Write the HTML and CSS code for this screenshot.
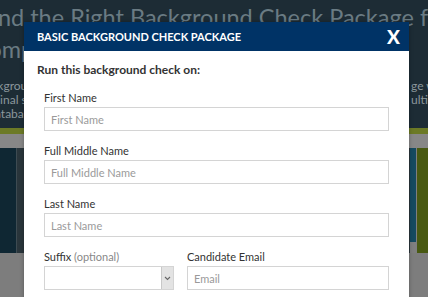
FILE: index.html
```html
<!DOCTYPE html>
<html lang="en">
<head>
  <meta charset="UTF-8" />
  <meta name="viewport" content="width=device-width, initial-scale=1.0"/>
  <title>Basic Background Check Package</title>
  <link rel="stylesheet" href="styles.css">
</head>
<body>
  <div class="page">
    <div class="hero">
      <h1><span class="h-l1">Find the Right Background Check Package for your</span><span class="h-l2">Company</span></h1>
      <div class="hero-text">
        <p class="line l1"><span>Background checks made simple. Choose a package</span><span>ge with</span></p>
        <p class="line l2"><span>Criminal searches, verifications and m</span><span>ulti</span></p>
        <p class="line l3"><span>Database record checks in one order</span><span></span></p>
      </div>
    </div>
    <div class="olive-line"></div>
    <div class="gray-band"></div>
    <div class="cols">
      <div class="col-dark"></div>
      <div class="col-sep"></div>
      <div class="col-mid"></div>
      <div class="col-teal"></div>
      <div class="col-olive"></div>
    </div>
    <div class="gray-foot"></div>
  </div>

  <div class="modal">
    <div class="modal-header">
      <h2>BASIC BACKGROUND CHECK PACKAGE</h2>
      <button class="close-btn">X</button>
    </div>
    <div class="modal-body">
      <h3>Run this background check on:</h3>
      <div class="field">
        <label>First Name</label>
        <input type="text" placeholder="First Name">
      </div>
      <div class="field">
        <label>Full Middle Name</label>
        <input type="text" placeholder="Full Middle Name">
      </div>
      <div class="field">
        <label>Last Name</label>
        <input type="text" placeholder="Last Name">
      </div>
      <div class="field-row">
        <div class="field suffix">
          <label>Suffix <span class="opt">(optional)</span></label>
          <div class="select">
            <span class="select-arrow">
              <svg width="7" height="5" viewBox="0 0 7 5"><path d="M1 1l2.5 2.5L6 1" fill="none" stroke="#666" stroke-width="1.1"/></svg>
            </span>
          </div>
        </div>
        <div class="field email">
          <label>Candidate Email</label>
          <input type="text" placeholder="Email">
        </div>
      </div>
    </div>
  </div>
</body>
</html>
```

FILE: styles.css
```css
body {
  margin: 0;
  width: 428px;
  height: 297px;
  overflow: hidden;
  position: relative;
  font-family: 'Lato', sans-serif;
  background: #7f7f7f;
}
.hero {
  height: 128px;
  background: #1d2c35;
  overflow: hidden;
}
.hero h1 {
  font-family: 'Lato', sans-serif;
  font-weight: 400;
  font-size: 23.5px;
  line-height: 32px;
  color: #6a7b83;
  margin: 1px 0 0 0;
  white-space: nowrap;
}
.h-l1,
.h-l2 {
  display: block;
}
.h-l1 {
  margin-left: -21px;
}
.h-l2 {
  margin-left: -27px;
}
.hero-text {
  margin-top: 14px;
}
.line {
  display: flex;
  justify-content: space-between;
  margin: 0;
  font-size: 12px;
  line-height: 14px;
  color: #8b979c;
  white-space: nowrap;
}
.line span:last-child {
  width: 17px;
  overflow: hidden;
}
.l1 span:first-child { margin-left: -22px; }
.l2 span:first-child { margin-left: -25px; }
.l3 span:first-child { margin-left: -14px; }
.olive-line {
  height: 6px;
  background: #6c7a26;
}
.gray-band {
  height: 14px;
  background: #878787;
}
.cols {
  display: flex;
  height: 105px;
  background: #7f7f7f;
}
.col-dark {
  width: 16px;
  background: #0f2733;
}
.col-sep {
  width: 1px;
  background: #3d4b52;
}
.col-mid {
  width: 393px;
  background: #29353b;
}
.col-teal {
  width: 6px;
  height: 94px;
  background: #154a60;
}
.col-olive {
  flex: 1;
  margin-left: 1px;
  background: #485911;
}
.gray-foot {
  height: 44px;
  background: #7d7d7d;
}
.modal {
  position: absolute;
  left: 24px;
  top: 22px;
  width: 385px;
  height: 290px;
  background: #fff;
  box-shadow: 0 0 4px rgba(0,0,0,0.3);
}
.modal-header {
  height: 29px;
  background: #003366;
  display: flex;
  justify-content: space-between;
  align-items: center;
  padding: 0 9px 0 13px;
}
.modal-header h2 {
  margin: 0;
  color: #fff;
  font-size: 11px;
  font-weight: 700;
}
.close-btn {
  background: transparent;
  border: none;
  color: #fff;
  font-family: 'Lato', sans-serif;
  font-weight: 900;
  font-size: 19px;
  padding: 0;
  line-height: 1;
}
.modal-body {
  padding: 11px 20px 0 20px;
}
.modal-body h3 {
  margin: 0 0 0 -7px;
  font-size: 12px;
  font-weight: 700;
  color: #333;
  line-height: 16px;
}
.field {
  display: flex;
  flex-direction: column;
}
.modal-body h3 + .field {
  margin-top: 13px;
}
.modal-body > .field + .field,
.modal-body > .field + .field-row {
  margin-top: 13px;
}
.field label {
  font-size: 11px;
  line-height: 14px;
  color: #333;
  margin-bottom: 2px;
}
.opt {
  color: #888;
}
.field input {
  height: 24px;
  box-sizing: border-box;
  border: 1px solid #d4d4d4;
  padding: 0 6px;
  font-family: 'Lato', sans-serif;
  font-size: 11px;
  color: #333;
  outline: none;
}
.field input::placeholder {
  color: #9a9a9a;
}
.field-row {
  display: flex;
  gap: 13px;
}
.suffix {
  width: 130px;
}
.email {
  flex: 1;
}
.select {
  height: 24px;
  box-sizing: border-box;
  border: 1px solid #d4d4d4;
  display: flex;
  justify-content: flex-end;
}
.select-arrow {
  width: 11px;
  background: #e3e3e3;
  border-left: 1px solid #c8c8c8;
  display: flex;
  align-items: center;
  justify-content: center;
}
```
